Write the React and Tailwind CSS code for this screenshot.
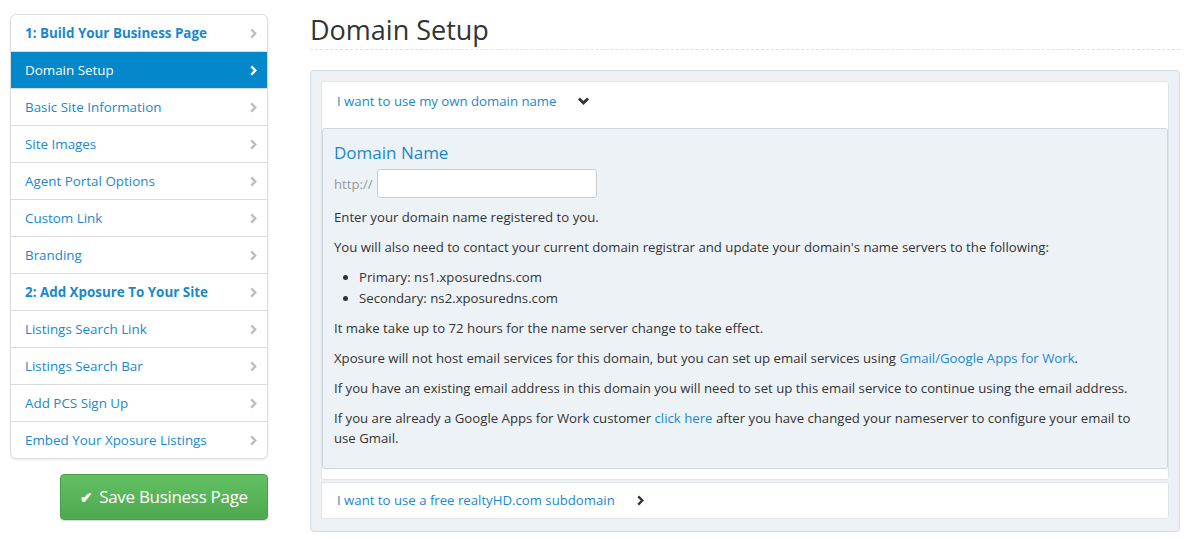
import React from "react";

const Chevron = ({ className = "" }) => (
  <svg viewBox="0 0 10 12" className={className} width="9" height="11">
    <polyline points="2.5,1.5 7,6 2.5,10.5" fill="none" stroke="currentColor" strokeWidth="2.6" strokeLinecap="butt" strokeLinejoin="miter" />
  </svg>
);

const ChevronDown = ({ className = "" }) => (
  <svg viewBox="0 0 12 10" className={className} width="13" height="10">
    <polyline points="1.5,2.5 6,7 10.5,2.5" fill="none" stroke="currentColor" strokeWidth="2.8" />
  </svg>
);

const items = [
  { label: "1: Build Your Business Page", bold: true },
  { label: "Domain Setup", active: true },
  { label: "Basic Site Information" },
  { label: "Site Images" },
  { label: "Agent Portal Options" },
  { label: "Custom Link" },
  { label: "Branding" },
  { label: "2: Add Xposure To Your Site", bold: true },
  { label: "Listings Search Link" },
  { label: "Listings Search Bar" },
  { label: "Add PCS Sign Up" },
  { label: "Embed Your Xposure Listings" },
];

export default function App() {
  return (
    <div className="w-[1193px] h-[539px] bg-white flex text-[#333]" style={{ fontFamily: '"Open Sans", "Noto Sans", sans-serif' }}>
      <div className="w-[258px] ml-[10px] mt-[14px] flex flex-col items-end">
        <div className="w-full border border-[#dcdcdc] rounded-[6px] overflow-hidden shadow-[0_1px_2px_rgba(0,0,0,0.08)] bg-white">
          {items.map((it, i) => (
            <div
              key={i}
              className={`flex items-center justify-between pl-[14px] pr-[9px] ${i > 0 ? "h-[37px] border-t border-[#dcdcdc]" : "h-[36px]"} ${it.active ? "bg-[#0587cb] text-white border-[#0587cb]" : "text-[#1a88cc]"}`}
            >
              <span className={`text-[13.4px] ${it.bold ? "font-bold" : ""}`}>{it.label}</span>
              <Chevron className={it.active ? "text-white" : "text-[#bdbdbd]"} />
            </div>
          ))}
        </div>
        <button className="mt-[15px] w-[208px] h-[46px] rounded-[4px] border border-[#4a9e4a] bg-gradient-to-b from-[#62c062] to-[#4fa94f] text-white text-[17px] flex items-center justify-center gap-[6px] shadow-[0_1px_1px_rgba(0,0,0,0.15)]">
          <span className="text-[15px] font-bold">✔</span>
          <span className="tracking-[-0.3px]">Save Business Page</span>
        </button>
      </div>

      <div className="ml-[42px] w-[870px] flex flex-col">
        <h1 className="mt-[12px] text-[27px] leading-[36px] text-[#333] pb-[1px] border-b border-dashed border-[#e0e0e0]">Domain Setup</h1>
        <div className="mt-[20px] border border-[#d3dae0] rounded-[4px] bg-[#edf1f5] px-[10px] pt-[10px] pb-[12px] flex flex-col gap-[2px]">
          <div className="bg-white border border-[#e2e6ea] rounded-[3px] pb-[10px]">
            <div className="h-[46px] flex items-start pt-[8px] pl-[15px] text-[13.2px] leading-[22px] text-[#1a88cc]">
              <span>I want to use my own domain name</span>
              <ChevronDown className="ml-[21px] mt-[6px] text-[#333]" />
            </div>
            <div className="bg-[#edf2f7] border border-[#cfd6dd] rounded-[3px] px-[11px] pt-[12px] pb-[20px] text-[13.2px] leading-[20px]">
              <div className="text-[17px] text-[#1a88cc] leading-[24px]">Domain Name</div>
              <div className="flex items-center mt-[4px] gap-[4px]">
                <span className="text-[#999]">http://</span>
                <div className="w-[220px] h-[29px] bg-white border border-[#ccc] rounded-[3px]" />
              </div>
              <p className="mt-[9px]">Enter your domain name registered to you.</p>
              <p className="mt-[10px]">You will also need to contact your current domain registrar and update your domain's name servers to the following:</p>
              <ul className="mt-[10px] pl-[25px] list-disc">
                <li className="leading-[21px]">Primary: ns1.xposuredns.com</li>
                <li className="leading-[21px]">Secondary: ns2.xposuredns.com</li>
              </ul>
              <p className="mt-[9px]">It make take up to 72 hours for the name server change to take effect.</p>
              <p className="mt-[10px]">Xposure will not host email services for this domain, but you can set up email services using <span className="text-[#1a88cc]">Gmail/Google Apps for Work</span>.</p>
              <p className="mt-[10px]">If you have an existing email address in this domain you will need to set up this email service to continue using the email address.</p>
              <p className="mt-[10px] max-w-[810px]">If you are already a Google Apps for Work customer <span className="text-[#1a88cc]">click here</span> after you have changed your nameserver to configure your email to use Gmail.</p>
            </div>
          </div>
          <div className="bg-white border border-[#e2e6ea] rounded-[3px] h-[37px] flex items-center pl-[15px] text-[13.2px] text-[#1a88cc]">
            <span>I want to use a free realtyHD.com subdomain</span>
            <Chevron className="ml-[21px] text-[#333]" />
          </div>
        </div>
      </div>
    </div>
  );
}
